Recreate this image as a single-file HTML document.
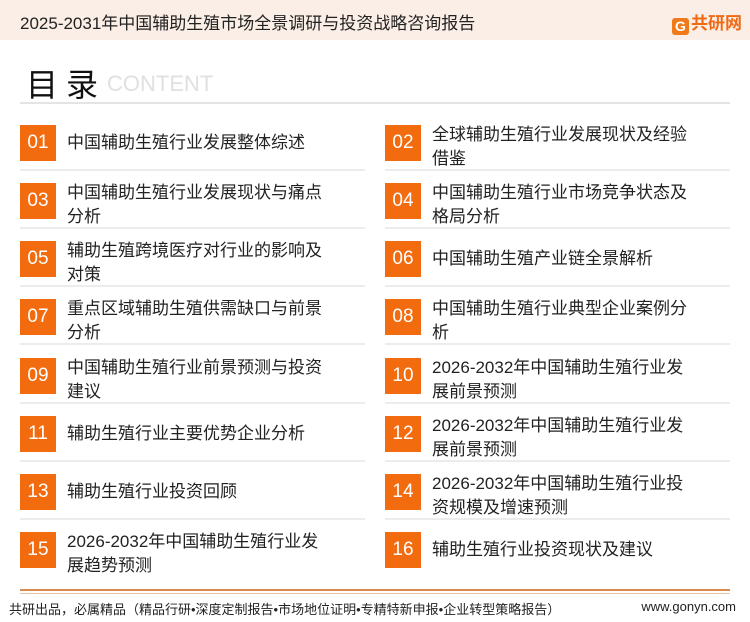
<!DOCTYPE html>
<html><head><meta charset="utf-8"><style>
body{margin:0;width:750px;height:622px;position:relative;background:#fff;font-family:"Liberation Sans","Noto Sans CJK SC",sans-serif;overflow:hidden;color:#222}
.hd{position:absolute;left:0;top:0;width:750px;height:40px;background:#fbeee6}
.hd .t{position:absolute;left:20px;top:9px;font-size:17px;color:#222}
.hd .logo{position:absolute;right:8px;top:9px;font-size:17px;font-weight:bold;color:#f06a14}
.hd .g{display:inline-block;width:17px;height:17px;background:#f07a1a;border-radius:3px;vertical-align:-2px;margin-right:2px;color:#fff;font-size:14px;text-align:center;line-height:17px}
.ti{position:absolute;left:26px;top:60px;font-size:32px;color:#111;letter-spacing:8px}
.en{position:absolute;left:107px;top:71px;font-size:22px;color:#e0e0e0}
.rule{position:absolute;left:20px;top:102px;width:710px;height:2px;background:#e4e4e4}
.it{position:absolute;width:345px;height:58px}
.it .b{position:absolute;left:0;top:0;width:36px;height:36px;background:#f36b0f;color:#fff;font-size:19px;text-align:center;line-height:36px}
.it .x{position:absolute;left:47px;font-size:17px;line-height:24px;color:#222;width:262px}
.it .x.s{top:6px}
.it .x.d{top:-2px}
.it .ln{position:absolute;left:0;right:0;top:44px;height:2px;background:#ececec}
.ft{position:absolute;left:20px;top:589px;width:710px;height:2px;background:#d88a4f}
.ft2{position:absolute;left:20px;top:593px;width:710px;height:1px;background:#e9c4a6}
.fl{position:absolute;left:9px;top:599px;font-size:13px;color:#222}
.fr{position:absolute;right:14px;top:599px;font-size:13px;color:#222}
</style></head><body>
<div class="hd"><div class="t">2025-2031年中国辅助生殖市场全景调研与投资战略咨询报告</div><div class="logo"><span class="g">G</span>共研网</div></div>
<div class="ti">目录</div><div class="en">CONTENT</div>
<div class="rule"></div>

<div class="it" style="left:20px;top:125px"><div class="b">01</div><div class="x s">中国辅助生殖行业发展整体综述</div><div class="ln"></div></div>
<div class="it" style="left:385px;top:125px"><div class="b">02</div><div class="x d">全球辅助生殖行业发展现状及经验借鉴</div><div class="ln"></div></div>

<div class="it" style="left:20px;top:183px"><div class="b">03</div><div class="x d">中国辅助生殖行业发展现状与痛点分析</div><div class="ln"></div></div>
<div class="it" style="left:385px;top:183px"><div class="b">04</div><div class="x d">中国辅助生殖行业市场竞争状态及格局分析</div><div class="ln"></div></div>

<div class="it" style="left:20px;top:241px"><div class="b">05</div><div class="x d">辅助生殖跨境医疗对行业的影响及对策</div><div class="ln"></div></div>
<div class="it" style="left:385px;top:241px"><div class="b">06</div><div class="x s">中国辅助生殖产业链全景解析</div><div class="ln"></div></div>

<div class="it" style="left:20px;top:299px"><div class="b">07</div><div class="x d">重点区域辅助生殖供需缺口与前景分析</div><div class="ln"></div></div>
<div class="it" style="left:385px;top:299px"><div class="b">08</div><div class="x d">中国辅助生殖行业典型企业案例分析</div><div class="ln"></div></div>

<div class="it" style="left:20px;top:358px"><div class="b">09</div><div class="x d">中国辅助生殖行业前景预测与投资建议</div><div class="ln"></div></div>
<div class="it" style="left:385px;top:358px"><div class="b">10</div><div class="x d">2026-2032年中国辅助生殖行业发展前景预测</div><div class="ln"></div></div>

<div class="it" style="left:20px;top:416px"><div class="b">11</div><div class="x s">辅助生殖行业主要优势企业分析</div><div class="ln"></div></div>
<div class="it" style="left:385px;top:416px"><div class="b">12</div><div class="x d">2026-2032年中国辅助生殖行业发展前景预测</div><div class="ln"></div></div>

<div class="it" style="left:20px;top:474px"><div class="b">13</div><div class="x s">辅助生殖行业投资回顾</div><div class="ln"></div></div>
<div class="it" style="left:385px;top:474px"><div class="b">14</div><div class="x d">2026-2032年中国辅助生殖行业投资规模及增速预测</div><div class="ln"></div></div>

<div class="it" style="left:20px;top:532px"><div class="b">15</div><div class="x d">2026-2032年中国辅助生殖行业发展趋势预测</div></div>
<div class="it" style="left:385px;top:532px"><div class="b">16</div><div class="x s">辅助生殖行业投资现状及建议</div></div>

<div class="ft"></div><div class="ft2"></div>
<div class="fl">共研出品，必属精品（精品行研•深度定制报告•市场地位证明•专精特新申报•企业转型策略报告）</div>
<div class="fr">www.gonyn.com</div>
</body></html>
